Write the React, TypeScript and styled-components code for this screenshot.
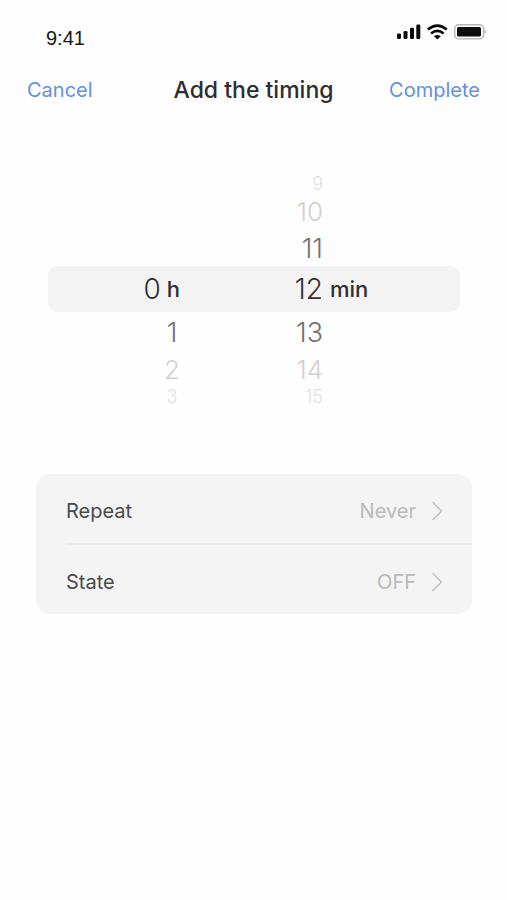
import React from "react";
import styled, { createGlobalStyle, css } from "styled-components";

const GlobalStyle = createGlobalStyle`
  * { box-sizing: border-box; }
  body {
    margin: 0;
    background: #fefefe;
    color: #333;
    font-family: Inter, "Liberation Sans", sans-serif;
  }
`;

const Screen = styled.main`
  display: flex;
  flex-direction: column;
  min-height: 100vh;
`;

const StatusBar = styled.header`
  display: flex;
  justify-content: space-between;
  align-items: flex-start;
  padding: 24px 20px 0 46px;
`;

const Clock = styled.time`
  margin-top: 4px;
  font: 20px/20px "Liberation Sans", sans-serif;
  color: #161616;
`;

const StatusIcons = styled.svg`
  display: block;
  width: 91px;
  height: 16px;
`;

const NavBar = styled.nav`
  display: grid;
  grid-template-columns: 1fr auto 1fr;
  align-items: center;
  height: 32px;
  margin-top: 26px;
  padding: 0 27px;
`;

const Title = styled.h1`
  margin: 0;
  font-size: 23px;
  line-height: 32px;
  font-weight: 500;
  color: #2d2d2d;
`;

const plainButton = css`
  border: 0;
  padding: 0;
  background: none;
  font-family: inherit;
  cursor: pointer;
`;

const NavButton = styled.button<{ $side: "start" | "end" }>`
  ${plainButton}
  justify-self: ${(p) => p.$side};
  font-size: 20px;
  line-height: 32px;
  color: #6490dc;
`;

const Wheel = styled.section`
  margin: 68px 47px 0 48px;
`;

type Tone = "selected" | "near" | "far" | "edge";

const tones = {
  selected: css`color: #303030; font-size: 28px;`,
  near: css`color: #717171; font-size: 27px;`,
  far: css`color: #d0d0d0; font-size: 26px;`,
  edge: css`color: #dedede; font-size: 18px;`,
};

const WheelRow = styled.div<{ $tone: Tone; $height: number }>`
  display: grid;
  grid-template-columns: 132fr 143fr 137fr;
  align-items: center;
  height: ${(p) => p.$height}px;
  border-radius: 9px;
  background: ${(p) => (p.$tone === "selected" ? "#f3f3f3" : "none")};
  ${(p) => tones[p.$tone]}
`;

const Value = styled.button`
  ${plainButton}
  color: inherit;
  font-size: inherit;
  font-weight: 300;
  line-height: 1;
`;

const Hour = styled.div<{ $selected: boolean }>`
  display: flex;
  justify-content: flex-end;
  align-items: center;
  gap: 6px;

  ${Value} {
    min-width: ${(p) => (p.$selected ? "0" : "16px")};
  }
`;

const Minute = styled.div`
  display: flex;
  justify-content: flex-end;
`;

const Unit = styled.span`
  font-size: 22px;
  font-weight: 500;
  line-height: 28px;
`;

const MinuteUnit = styled(Unit)`
  padding-left: 7px;
`;

const Card = styled.section`
  margin: 70px 35px 0 36px;
  border-radius: 14px;
  background: #f4f4f4;
  overflow: hidden;
`;

const Setting = styled.button`
  ${plainButton}
  display: flex;
  align-items: center;
  width: 100%;
  height: 69px;
  padding: 4px 29px 0 30px;
  font-size: 20px;
  text-align: left;
`;

const Divider = styled.hr`
  height: 2px;
  margin: 0 0 0 30px;
  border: 0;
  background: #ebebeb;
`;

const SettingName = styled.span`
  flex: 1;
  color: #4a4a4a;
`;

const SettingValue = styled.span`
  color: #b9b9b9;
`;

const Chevron = styled.svg`
  width: 12px;
  height: 20px;
  margin-left: 15px;
`;

const rows: { hour?: string; minute: string; tone: Tone; height: number }[] = [
  { minute: "9", tone: "edge", height: 20 },
  { minute: "10", tone: "far", height: 36 },
  { minute: "11", tone: "near", height: 36 },
  { hour: "0", minute: "12", tone: "selected", height: 46 },
  { hour: "1", minute: "13", tone: "near", height: 40 },
  { hour: "2", minute: "14", tone: "far", height: 36 },
  { hour: "3", minute: "15", tone: "edge", height: 16 },
];

function SettingRow({ name, value }: { name: string; value: string }) {
  return (
    <Setting type="button">
      <SettingName>{name}</SettingName>
      <SettingValue>{value}</SettingValue>
      <Chevron viewBox="0 0 12 20" fill="none" stroke="#bfbfbf" strokeWidth="1.4" aria-hidden="true">
        <path d="M1.5 1L10.5 10L1.5 19" />
      </Chevron>
    </Setting>
  );
}

export default function App() {
  return (
    <>
      <GlobalStyle />
      <Screen>
        <StatusBar>
          <Clock>9:41</Clock>
          <StatusIcons viewBox="0 0 91 16" aria-hidden="true">
            <g fill="#0c0c0c">
              <rect x="1" y="9.5" width="4" height="5.5" rx="1.3" />
              <rect x="7.5" y="7" width="4" height="8" rx="1.3" />
              <rect x="14" y="3.8" width="4" height="11.2" rx="1.3" />
              <rect x="20.3" y="0.5" width="4" height="14.5" rx="1.3" />
              <path d="M37.8 12.2Q41.3 9.6 44.8 12.2L41.3 15.6Z" />
              <rect x="61" y="3" width="24" height="9.6" rx="1.5" />
            </g>
            <g fill="none" stroke="#0c0c0c" strokeWidth="2.6">
              <path d="M31.8 5.6Q41.3 -2.4 50.8 5.6" />
              <path d="M35 9.4Q41.3 4.2 47.6 9.4" />
            </g>
            <rect x="58.7" y="0.7" width="28.9" height="14.2" rx="4" fill="none" stroke="#b4b4b4" strokeWidth="1.4" />
            <path d="M88.7 5.5Q91.5 7.8 88.7 10.1Z" fill="#b4b4b4" />
          </StatusIcons>
        </StatusBar>
        <NavBar>
          <NavButton type="button" $side="start">Cancel</NavButton>
          <Title>Add the timing</Title>
          <NavButton type="button" $side="end">Complete</NavButton>
        </NavBar>
        <Wheel aria-label="Time">
          {rows.map((row) => (
            <WheelRow key={row.minute} $tone={row.tone} $height={row.height}>
              <Hour $selected={row.tone === "selected"}>
                {row.hour && <Value type="button">{row.hour}</Value>}
                {row.tone === "selected" && <Unit>h</Unit>}
              </Hour>
              <Minute>
                <Value type="button">{row.minute}</Value>
              </Minute>
              {row.tone === "selected" && <MinuteUnit>min</MinuteUnit>}
            </WheelRow>
          ))}
        </Wheel>
        <Card>
          <SettingRow name="Repeat" value="Never" />
          <Divider />
          <SettingRow name="State" value="OFF" />
        </Card>
      </Screen>
    </>
  );
}
